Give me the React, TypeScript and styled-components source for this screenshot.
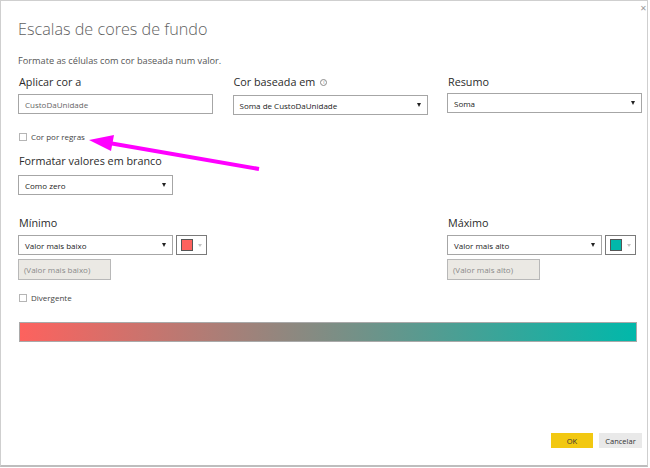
import React from "react";
import styled, { createGlobalStyle } from "styled-components";

const Global = createGlobalStyle`
  html, body { margin: 0; padding: 0; background: #ffffff; }
  body { font-family: "Open Sans", "Noto Sans", sans-serif; color: #333; }
  * { box-sizing: border-box; }
`;

const Dialog = styled.div`
  position: relative;
  width: 648px;
  height: 467px;
  border: 1px solid #cfcfcf;
  border-bottom: 2px solid #bdbdbd;
  padding: 0 17px;
  display: flex;
  flex-direction: column;
  background: #fff;
`;

const Close = styled.span`
  position: absolute;
  right: 0px;
  top: 2px;
  font-size: 8px;
  color: #999;
  line-height: 10px;
`;

const Title = styled.h1`
  margin: 17px 0 0 0;
  font-weight: 300;
  font-size: 16.2px;
  line-height: 22px;
  color: #5f5f5f;
`;

const Subtitle = styled.p`
  margin: 15px 0 0 0;
  font-size: 9.2px;
  line-height: 12px;
  color: #555;
`;

const Grid = styled.div<{ $mt: number }>`
  display: grid;
  grid-template-columns: 195px 195px 195px;
  column-gap: 19.5px;
  margin-top: ${(p) => p.$mt}px;
`;

const Field = styled.div<{ $col?: number }>`
  display: flex;
  flex-direction: column;
  grid-column: ${(p) => p.$col ?? "auto"};
`;

const Label = styled.div`
  font-size: 10.8px;
  line-height: 16px;
  color: #2b2b2b;
  display: flex;
  align-items: center;
  gap: 5px;
  height: 16px;
  padding-left: 1px;
`;

const Info = styled.span`
  width: 7px;
  height: 7px;
  border: 1px solid #8a8a8a;
  border-radius: 50%;
  display: inline-flex;
  align-items: center;
  justify-content: center;
  font-size: 5px;
  line-height: 5px;
  color: #777;
`;

const Box = styled.div<{ $w?: number; $mt?: number }>`
  width: ${(p) => (p.$w ? `${p.$w}px` : "100%")};
  height: 20px;
  margin-top: ${(p) => p.$mt ?? 0}px;
  border: 1px solid #a6a6a6;
  background: #fff;
  display: flex;
  align-items: center;
  justify-content: space-between;
  padding: 0 6px 0 6px;
  font-size: 8px;
  color: #3a3a3a;
`;

const InputText = styled.span<{ $muted?: boolean }>`
  color: ${(p) => (p.$muted ? "#666" : "#222")};
`;

const Caret = styled.span`
  width: 0;
  height: 0;
  border-left: 2.5px solid transparent;
  border-right: 2.5px solid transparent;
  border-top: 4px solid #222;
`;

const Disabled = styled.div<{ $w: number }>`
  width: ${(p) => p.$w}px;
  height: 21px;
  margin-top: 4px;
  border: 1px solid #b8b8b8;
  background: #ebe9e4;
  display: flex;
  align-items: center;
  padding: 0 5px;
  font-size: 8px;
  color: #8a8a8a;
`;

const CheckRow = styled.label<{ $mt: number }>`
  display: flex;
  align-items: center;
  gap: 4px;
  margin-top: ${(p) => p.$mt}px;
  font-size: 8px;
  color: #444;
  height: 11px;
  margin-left: 1px;
`;

const Check = styled.span`
  width: 8px;
  height: 8px;
  border: 1px solid #b5b5b5;
  background: #fff;
`;

const Row = styled.div`
  display: flex;
  gap: 3px;
  margin-top: 4px;
`;

const Picker = styled.div`
  width: 31px;
  height: 20px;
  border: 1px solid #7a7a7a;
  display: flex;
  align-items: center;
  gap: 5px;
  padding-left: 4px;
`;

const Swatch = styled.span<{ $c: string }>`
  width: 12px;
  height: 12px;
  background: ${(p) => p.$c};
  border: 1px solid #555;
`;

const PickerCaret = styled.span`
  width: 0;
  height: 0;
  border-left: 2.5px solid transparent;
  border-right: 2.5px solid transparent;
  border-top: 3px solid #c4c4c4;
`;

const Section = styled.div<{ $mt: number }>`
  margin-top: ${(p) => p.$mt}px;
  display: flex;
  flex-direction: column;
`;

const Gradient = styled.div`
  margin-top: 19px;
  width: 618px;
  height: 20px;
  margin-left: 1px;
  border: 1px solid #a9a9a9;
  background: linear-gradient(to right, #fd625e, #01b8aa);
`;

const Footer = styled.div`
  margin-top: auto;
  margin-bottom: 17px;
  margin-right: -12px;
  display: flex;
  justify-content: flex-end;
  gap: 6px;
`;

const Button = styled.button<{ $primary?: boolean }>`
  width: ${(p) => (p.$primary ? 42 : 43)}px;
  height: 15px;
  border: none;
  padding: 0;
  font-family: inherit;
  font-size: 7.5px;
  color: #333;
  background: ${(p) => (p.$primary ? "#f2c811" : "#e9e9e9")};
`;

const Arrow = styled.svg`
  position: absolute;
  left: 0;
  top: 0;
  pointer-events: none;
`;

export default function App() {
  return (
    <>
      <Global />
      <Dialog>
        <Close>✕</Close>
        <Title>Escalas de cores de fundo</Title>
        <Subtitle>Formate as células com cor baseada num valor.</Subtitle>
        <Grid $mt={7}>
          <Field>
            <Label>Aplicar cor a</Label>
            <Box $mt={4}>
              <InputText $muted>CustoDaUnidade</InputText>
            </Box>
          </Field>
          <Field>
            <Label>
              Cor baseada em <Info>i</Info>
            </Label>
            <Box $mt={5}>
              <InputText>Soma de CustoDaUnidade</InputText>
              <Caret />
            </Box>
          </Field>
          <Field>
            <Label>Resumo</Label>
            <Box $mt={3}>
              <InputText>Soma</InputText>
              <Caret />
            </Box>
          </Field>
        </Grid>
        <CheckRow $mt={16}>
          <Check />
          Cor por regras
        </CheckRow>
        <Section $mt={11}>
          <Label>Formatar valores em branco</Label>
          <Box $w={155} $mt={6}>
            <InputText>Como zero</InputText>
            <Caret />
          </Box>
        </Section>
        <Grid $mt={20}>
          <Field $col={1}>
            <Label>Mínimo</Label>
            <Row>
              <Box $w={155}>
                <InputText>Valor mais baixo</InputText>
                <Caret />
              </Box>
              <Picker>
                <Swatch $c="#fd625e" />
                <PickerCaret />
              </Picker>
            </Row>
            <Disabled $w={93}>(Valor mais baixo)</Disabled>
          </Field>
          <Field $col={3}>
            <Label>Máximo</Label>
            <Row>
              <Box $w={155}>
                <InputText>Valor mais alto</InputText>
                <Caret />
              </Box>
              <Picker>
                <Swatch $c="#01b8aa" />
                <PickerCaret />
              </Picker>
            </Row>
            <Disabled $w={93}>(Valor mais alto)</Disabled>
          </Field>
        </Grid>
        <CheckRow $mt={12}>
          <Check />
          Divergente
        </CheckRow>
        <Gradient />
        <Footer>
          <Button $primary>OK</Button>
          <Button>Cancelar</Button>
        </Footer>
        <Arrow width="648" height="466" viewBox="0 0 648 466">
          <line x1="258" y1="168" x2="108" y2="142" stroke="#ff00ff" strokeWidth="4" />
          <polygon points="88,139 113,134 110,150" fill="#ff00ff" />
        </Arrow>
      </Dialog>
    </>
  );
}
